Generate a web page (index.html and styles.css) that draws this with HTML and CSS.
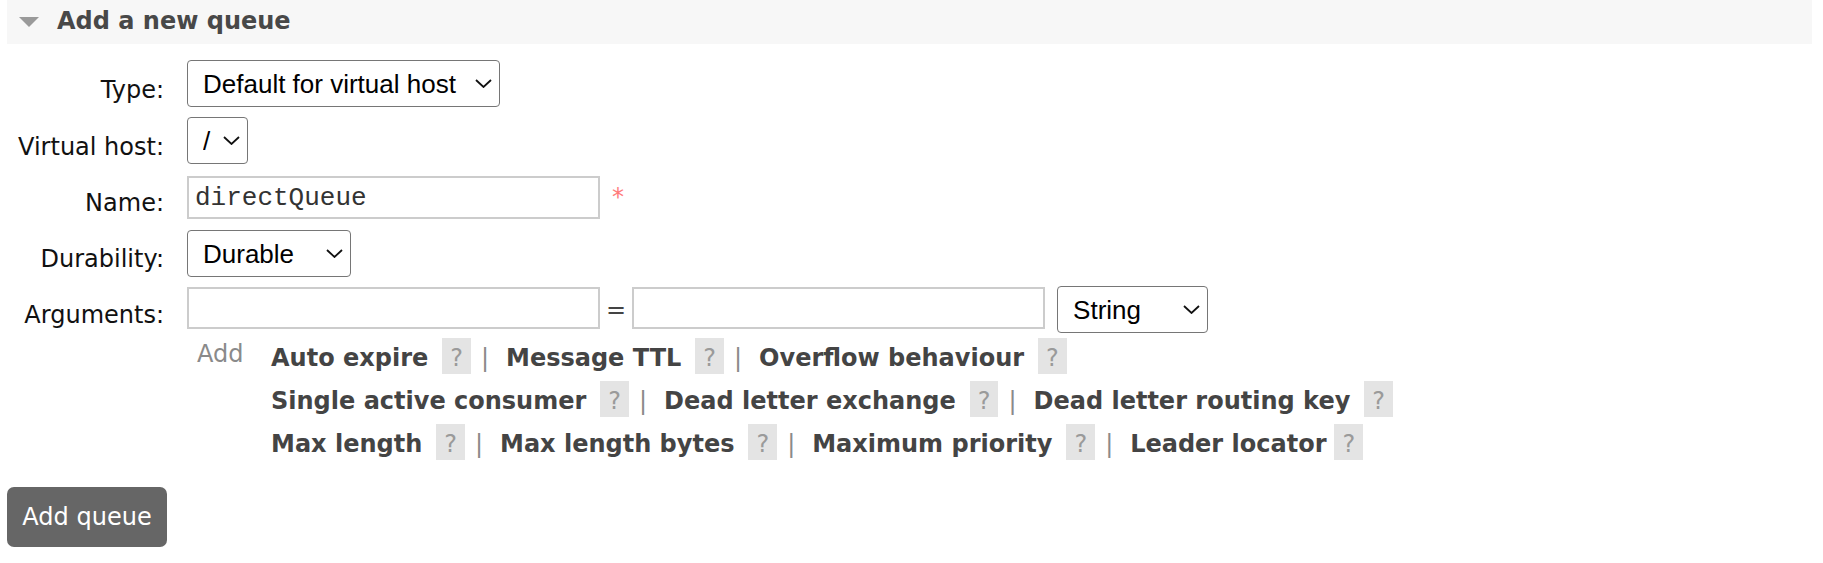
FILE: index.html
```html
<!DOCTYPE html>
<html lang="en">
<head>
<meta charset="utf-8">
<title>Add a new queue</title>
<link rel="stylesheet" href="styles.css">
</head>
<body>
<div class="page">
  <h2 class="section-head">
    <svg class="tri" width="20" height="10" viewBox="0 0 20 10"><polygon points="0,0 20,0 10,10" fill="#9a9a9a"/></svg>
    <span>Add a new queue</span>
  </h2>

  <div class="form">
    <div class="row row-type">
      <label class="lbl lbl-hi">Type:</label>
      <div class="ctl">
        <div class="sel w-type">
          <select><option>Default for virtual host</option><option>Classic</option><option>Quorum</option><option>Stream</option></select>
          <svg class="chev" width="17" height="9" viewBox="0 0 17 9"><polyline points="1,1 8.5,8 16,1" fill="none" stroke="#111" stroke-width="1.8"/></svg>
        </div>
      </div>
    </div>

    <div class="row row-gap">
      <label class="lbl lbl-hi">Virtual host:</label>
      <div class="ctl">
        <div class="sel w-vhost">
          <select><option>/</option></select>
          <svg class="chev" width="17" height="9" viewBox="0 0 17 9"><polyline points="1,1 8.5,8 16,1" fill="none" stroke="#111" stroke-width="1.8"/></svg>
        </div>
      </div>
    </div>

    <div class="row row-gap">
      <label class="lbl">Name:</label>
      <div class="ctl">
        <input class="txt txt-name" type="text" value="directQueue">
        <span class="req">*</span>
      </div>
    </div>

    <div class="row row-gap">
      <label class="lbl">Durability:</label>
      <div class="ctl">
        <div class="sel w-dur">
          <select><option>Durable</option><option>Transient</option></select>
          <svg class="chev" width="17" height="9" viewBox="0 0 17 9"><polyline points="1,1 8.5,8 16,1" fill="none" stroke="#111" stroke-width="1.8"/></svg>
        </div>
      </div>
    </div>

    <div class="row row-args">
      <label class="lbl">Arguments:</label>
      <div class="ctl ctl-args">
        <input class="txt txt-arg" type="text">
        <span class="eq">=</span>
        <input class="txt txt-arg" type="text">
        <div class="sel w-str">
          <select><option>String</option><option>Number</option><option>Boolean</option><option>List</option></select>
          <svg class="chev" width="17" height="9" viewBox="0 0 17 9"><polyline points="1,1 8.5,8 16,1" fill="none" stroke="#111" stroke-width="1.8"/></svg>
        </div>
      </div>
    </div>

    <div class="row row-add">
      <div class="lbl"></div>
      <div class="ctl ctl-add">
        <div class="add-lbl">Add</div>
        <div class="arglist">
          <div class="argline">
            <span class="alink">Auto expire</span><span class="help">?</span><span class="sep">|</span>
            <span class="alink">Message TTL</span><span class="help">?</span><span class="sep">|</span>
            <span class="alink">Overflow behaviour</span><span class="help">?</span>
          </div>
          <div class="argline">
            <span class="alink">Single active consumer</span><span class="help">?</span><span class="sep">|</span>
            <span class="alink">Dead letter exchange</span><span class="help">?</span><span class="sep">|</span>
            <span class="alink">Dead letter routing key</span><span class="help">?</span>
          </div>
          <div class="argline">
            <span class="alink">Max length</span><span class="help">?</span><span class="sep">|</span>
            <span class="alink">Max length bytes</span><span class="help">?</span><span class="sep">|</span>
            <span class="alink">Maximum priority</span><span class="help">?</span><span class="sep">|</span>
            <span class="alink">Leader locator</span><span class="help help-tight">?</span>
          </div>
        </div>
      </div>
    </div>
  </div>

  <button class="btn" type="button">Add queue</button>
</div>
</body>
</html>
```

FILE: styles.css
```css
* {
  box-sizing: border-box;
}

html, body {
  margin: 0;
  padding: 0;
  background: #ffffff;
}

body {
  font-family: "DejaVu Sans", Verdana, sans-serif;
  font-size: 24px;
  line-height: 28px;
  color: #444444;
}

.page {
  padding: 0 11px 0 7px;
}

/* section header */
.section-head {
  margin: 0;
  height: 44px;
  padding-top: 7px;
  background: #f7f7f7;
  display: flex;
  align-items: flex-start;
  font-size: 24px;
  line-height: 28px;
  font-weight: bold;
  color: #484848;
}

.tri {
  display: block;
  flex: none;
  margin: 10px 18px 0 12px;
}

/* form */
.form {
  margin-top: 16px;
  display: flex;
  flex-direction: column;
}

.row {
  display: flex;
  align-items: flex-start;
}

.row-gap {
  margin-top: 10px;
}

.row-args {
  margin-top: 9px;
}

.row-add {
  margin-top: 5px;
}

.lbl {
  flex: none;
  width: 157px;
  text-align: right;
  padding-top: 15px;
  line-height: 28px;
  color: #111111;
  white-space: nowrap;
}

.lbl-hi {
  padding-top: 16px;
}

.ctl {
  margin-left: 23px;
  display: flex;
  align-items: flex-start;
}

/* selects */
.sel {
  position: relative;
  flex: none;
  height: 47px;
}

.sel select {
  -webkit-appearance: none;
  appearance: none;
  display: block;
  width: 100%;
  height: 47px;
  margin: 0;
  padding: 0 33px 0 15px;
  border: 1px solid #767676;
  border-radius: 4px;
  background: #ffffff;
  color: #000000;
  font-family: "Liberation Sans", Arial, sans-serif;
  font-size: 26px;
}

.chev {
  position: absolute;
  right: 8px;
  top: 19px;
  pointer-events: none;
}

.w-type { width: 313px; }
.w-vhost { width: 61px; }
.w-dur { width: 164px; }
.w-str { width: 151px; margin-left: 12px; }

/* text inputs */
.txt {
  display: block;
  flex: none;
  width: 413px;
  margin: 0;
  padding: 0 6px;
  border: 2px solid #cccccc;
  border-radius: 0;
  background: #ffffff;
  color: #333333;
  font-family: "Liberation Mono", "Courier New", monospace;
  font-size: 26px;
  outline: none;
}

.txt-name {
  height: 43px;
  margin: 2px 0 1px 0;
}

.txt-arg {
  height: 42px;
  margin-top: 1px;
}

.req {
  margin-left: 12px;
  padding-top: 9px;
  line-height: 28px;
  color: #ff7a7a;
}

.eq {
  align-self: center;
  margin: 0 6px 0 6px;
  color: #444444;
}

/* arguments shortcuts */
.ctl-add {
  align-items: flex-start;
}

.add-lbl {
  flex: none;
  width: 84px;
  padding-left: 10px;
  padding-top: 2px;
  color: #8a8a8a;
}

.arglist {
  display: flex;
  flex-direction: column;
  gap: 7px;
}

.argline {
  display: flex;
  align-items: baseline;
  white-space: nowrap;
}

.alink {
  font-weight: bold;
  color: #444444;
}

.help {
  display: inline-block;
  margin-left: 14px;
  padding: 6px 8px 2px 8px;
  line-height: 28px;
  background: #e4e4e4;
  color: #9a9a9a;
}

.help-tight {
  margin-left: 8px;
}

.sep {
  display: inline-block;
  width: 8px;
  margin-left: 10px;
  margin-right: 17px;
  text-align: center;
  color: #8a8a8a;
}

/* button */
.btn {
  display: block;
  margin-top: 27px;
  width: 160px;
  height: 60px;
  padding: 0 15px;
  border: none;
  border-radius: 7px;
  background: #666666;
  color: #ffffff;
  font-family: "DejaVu Sans", Verdana, sans-serif;
  font-size: 24px;
  cursor: pointer;
}
```
